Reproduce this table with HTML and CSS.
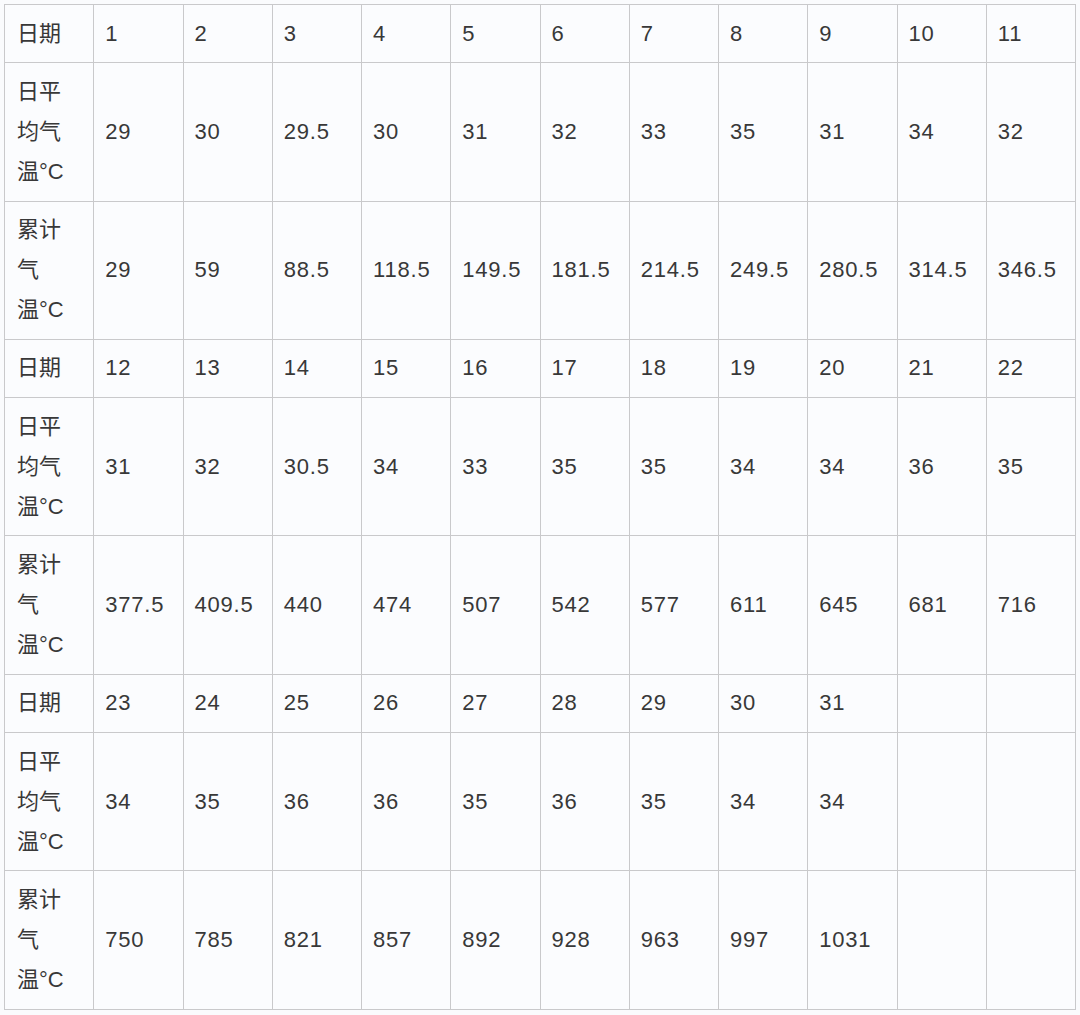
FILE: index.html
```html
<!DOCTYPE html>
<html lang="zh-CN">
<head>
<meta charset="utf-8">
<link rel="stylesheet" href="styles.css">
</head>
<body>
<table class="temps">
<tbody>
<tr><td>日期</td><td>1</td><td>2</td><td>3</td><td>4</td><td>5</td><td>6</td><td>7</td><td>8</td><td>9</td><td>10</td><td>11</td></tr>
<tr><td>日平<br>均气<br>温°C</td><td>29</td><td>30</td><td>29.5</td><td>30</td><td>31</td><td>32</td><td>33</td><td>35</td><td>31</td><td>34</td><td>32</td></tr>
<tr><td>累计<br>气<br>温°C</td><td>29</td><td>59</td><td>88.5</td><td>118.5</td><td>149.5</td><td>181.5</td><td>214.5</td><td>249.5</td><td>280.5</td><td>314.5</td><td>346.5</td></tr>
<tr><td>日期</td><td>12</td><td>13</td><td>14</td><td>15</td><td>16</td><td>17</td><td>18</td><td>19</td><td>20</td><td>21</td><td>22</td></tr>
<tr><td>日平<br>均气<br>温°C</td><td>31</td><td>32</td><td>30.5</td><td>34</td><td>33</td><td>35</td><td>35</td><td>34</td><td>34</td><td>36</td><td>35</td></tr>
<tr><td>累计<br>气<br>温°C</td><td>377.5</td><td>409.5</td><td>440</td><td>474</td><td>507</td><td>542</td><td>577</td><td>611</td><td>645</td><td>681</td><td>716</td></tr>
<tr><td>日期</td><td>23</td><td>24</td><td>25</td><td>26</td><td>27</td><td>28</td><td>29</td><td>30</td><td>31</td><td></td><td></td></tr>
<tr><td>日平<br>均气<br>温°C</td><td>34</td><td>35</td><td>36</td><td>36</td><td>35</td><td>36</td><td>35</td><td>34</td><td>34</td><td></td><td></td></tr>
<tr><td>累计<br>气<br>温°C</td><td>750</td><td>785</td><td>821</td><td>857</td><td>892</td><td>928</td><td>963</td><td>997</td><td>1031</td><td></td><td></td></tr>
</tbody>
</table>
</body>
</html>
```

FILE: styles.css
```css
html, body {
  margin: 0;
  padding: 0;
  background: #fafbfd;
}
body {
  padding: 4px 0 0 4px;
  font-family: "Liberation Sans", Arial, "Noto Sans CJK SC", sans-serif;
  color: #383838;
}
.temps {
  border-collapse: collapse;
  table-layout: fixed;
  width: 1072px;
  background: #fbfcfe;
}
.temps td {
  border: 1px solid #c9c9cb;
  padding: 8.65px 10px 8.65px 11px;
  font-size: 22px;
  line-height: 40px;
  letter-spacing: 0.8px;
  vertical-align: middle;
  text-align: left;
  white-space: nowrap;
}
.temps td:first-child {
  padding-left: 12px;
  letter-spacing: 0;
}
```
